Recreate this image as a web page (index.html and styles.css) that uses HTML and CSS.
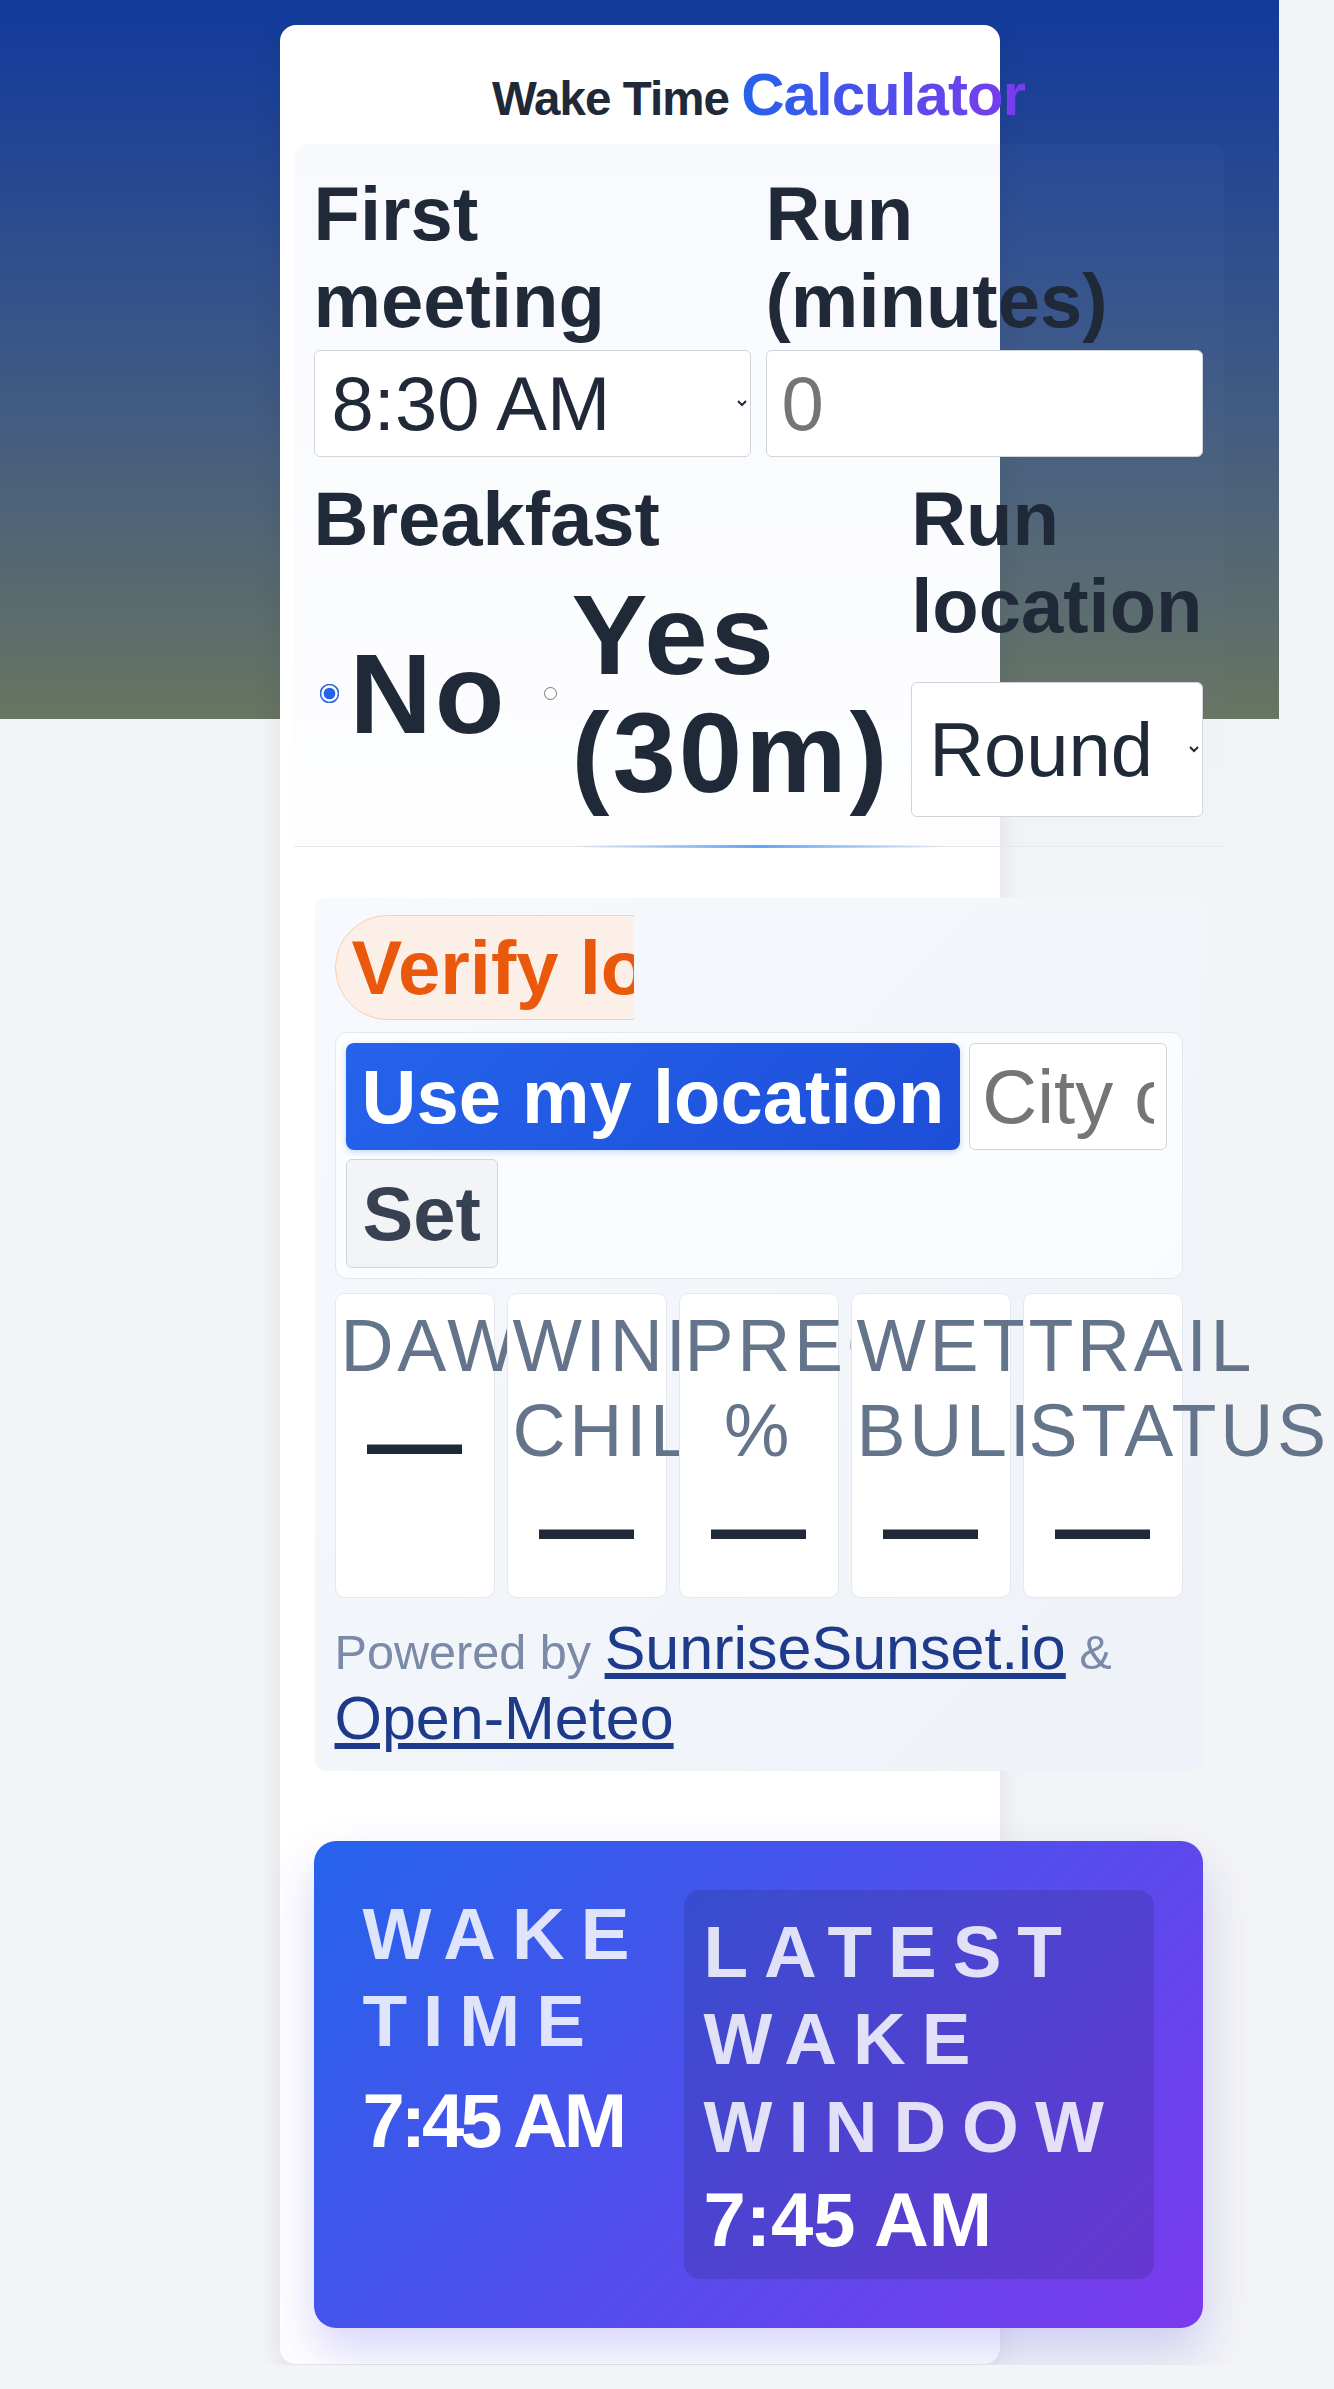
FILE: index.html
```html
<!DOCTYPE html>
<html lang="en">
<head>
<meta charset="utf-8">
<title>Wake Time Calculator</title>
<link rel="stylesheet" href="styles.css">
</head>
<body>
<main class="card">
  <div class="inner">
    <h1 class="title">Wake Time <span class="title-accent">Calculator</span></h1>

    <section class="form">
      <div class="row row-half">
        <div class="field">
          <label class="label" for="meeting">First meeting</label>
          <select id="meeting" class="control">
            <option>8:30 AM</option>
          </select>
        </div>
        <div class="field">
          <label class="label" for="run">Run (minutes)</label>
          <input id="run" class="control control-input" type="text" placeholder="0">
        </div>
      </div>
      <div class="row row-wide">
        <div class="field">
          <span class="label">Breakfast</span>
          <div class="radios">
            <label class="option"><input class="radio" type="radio" name="breakfast" checked><span class="option-text">No</span></label>
            <label class="option"><input class="radio" type="radio" name="breakfast"><span class="option-text">Yes (30m)</span></label>
          </div>
        </div>
        <div class="field">
          <label class="label" for="loc">Run location</label>
          <select id="loc" class="control control-stretch">
            <option>Round</option>
          </select>
        </div>
      </div>
    </section>

    <section class="loc">
      <div class="badge-clip"><span class="badge">Verify location</span></div>
      <div class="loc-box">
        <button class="btn btn-primary" type="button">Use my location</button>
        <input class="city" type="text" placeholder="City or ZIP">
        <button class="btn btn-secondary" type="button">Set</button>
      </div>
      <div class="stats">
        <div class="stat"><div class="stat-label">Dawn</div><div class="stat-value">—</div></div>
        <div class="stat"><div class="stat-label">Wind chill</div><div class="stat-value">—</div></div>
        <div class="stat"><div class="stat-label">Precip %</div><div class="stat-value">—</div></div>
        <div class="stat"><div class="stat-label">Wet bulb</div><div class="stat-value">—</div></div>
        <div class="stat"><div class="stat-label">Trail status</div><div class="stat-value">—</div></div>
      </div>
      <p class="credits">Powered by <a href="#">SunriseSunset.io</a> &amp; <a href="#">Open-Meteo</a></p>
    </section>

    <section class="result">
      <div class="res-col">
        <div class="res-label">Wake time</div>
        <div class="res-value res-value-main">7:45 AM</div>
      </div>
      <div class="res-latest">
        <div class="res-label">Latest wake window</div>
        <div class="res-value res-value-latest">7:45 AM</div>
      </div>
    </section>
  </div>
</main>
</body>
</html>
```

FILE: styles.css
```css
html {
  background: #f3f4f6;
}

body {
  margin: 0;
  padding: 0 55px 1px 0;
  font-family: "Liberation Sans", Arial, sans-serif;
  color: #1f2937;
  background: linear-gradient(180deg, #113a9c 0%, #3c5786 50%, #687562 100%) 0 0 / 1279px 719px no-repeat;
}

.card {
  width: 720px;
  box-sizing: border-box;
  margin: 25px auto 0;
  padding: 14px;
  background: #fff;
  border-radius: 16px;
  box-shadow: 0 10px 30px rgba(15, 23, 42, 0.08);
}

.inner {
  width: 930px;
}

.title {
  margin: 21px 0 14.5px;
  text-align: center;
  font-size: 47.5px;
  font-weight: 700;
  letter-spacing: -0.02em;
  line-height: normal;
  color: #1f2937;
}

.title-accent {
  font-size: 60px;
  background: linear-gradient(90deg, #2563eb, #7c3aed);
  -webkit-background-clip: text;
  background-clip: text;
  color: transparent;
}

/* ---------- form ---------- */
.form {
  position: relative;
  display: flex;
  flex-direction: column;
  gap: 18px;
  padding: 26px 21px 29px 20px;
  border-bottom: 1px solid #e5e7eb;
  border-radius: 14px 14px 0 0;
  background: linear-gradient(180deg, rgba(120, 150, 220, 0.055), rgba(120, 150, 220, 0.01));
}

.form::after {
  content: "";
  position: absolute;
  left: 30%;
  width: 40%;
  bottom: -2px;
  height: 3px;
  background: linear-gradient(90deg, rgba(96, 165, 250, 0), #60a5fa, rgba(96, 165, 250, 0));
}

.row {
  display: grid;
  gap: 15px;
}

.row-half {
  grid-template-columns: 1fr 1fr;
}

.row-wide {
  grid-template-columns: 2fr 1fr;
}

.field {
  display: grid;
  gap: 6px;
  min-width: 0;
}

.label {
  font-size: 76px;
  font-weight: 700;
  line-height: normal;
  color: #1f2937;
}

.control {
  width: 100%;
  box-sizing: border-box;
  margin: 0;
  font-family: inherit;
  font-size: 76px;
  line-height: normal;
  color: #1f2937;
  padding: 9px 13px;
  border: 1px solid #d1d5db;
  border-radius: 6px;
  background: #fff;
}

.control-input {
  padding: 9px 15px;
}

.control-stretch {
  align-self: stretch;
  height: auto;
}

.control::placeholder,
.city::placeholder {
  color: #757575;
}

.radios {
  display: flex;
  align-items: center;
  gap: 37px;
  padding: 8px 0 5px 9px;
}

.option {
  display: flex;
  align-items: center;
  gap: 14px;
}

.radio {
  flex: none;
  width: 13px;
  height: 13px;
  margin: 0;
  accent-color: #2563eb;
}

.radio:checked {
  transform: scale(1.5);
}

.option-text {
  font-size: 114px;
  font-weight: 700;
  letter-spacing: 3px;
  line-height: 118px;
  color: #1f2937;
}

/* ---------- location panel ---------- */
.loc {
  margin: 51.3px 21px 0 21px;
  padding: 17px 20px 18px;
  border-radius: 12px;
  background: linear-gradient(135deg, #f6f9fd, #eef2f8);
}

.badge-clip {
  display: flex;
  width: 299px;
  overflow: hidden;
}

.badge {
  flex: none;
  white-space: nowrap;
  padding: 8px 16px;
  border: 1px solid #fbcfab;
  border-radius: 999px;
  background: #fbefe7;
  color: #ea580c;
  font-size: 76px;
  font-weight: 700;
  line-height: normal;
}

.loc-box {
  margin-top: 12px;
  display: flex;
  flex-wrap: wrap;
  gap: 9px;
  padding: 10px;
  border: 1px solid #e2e8f0;
  border-radius: 12px;
  background: rgba(255, 255, 255, 0.65);
}

.btn {
  margin: 0;
  font-family: inherit;
  font-size: 76px;
  font-weight: 700;
  line-height: normal;
  padding: 10px 16px;
  border-radius: 8px;
  cursor: pointer;
}

.btn-primary {
  border: 0;
  color: #fff;
  background: linear-gradient(135deg, #2563eb, #1d4ed8);
  box-shadow: 0 2px 6px rgba(37, 99, 235, 0.25);
}

.btn-secondary {
  border: 1px solid #d1d5db;
  background: #f3f4f6;
  color: #374151;
  border-radius: 6px;
}

.city {
  width: 198px;
  box-sizing: border-box;
  margin: 0;
  font-family: inherit;
  font-size: 76px;
  line-height: normal;
  padding: 9px 12px;
  border: 1px solid #d1d5db;
  border-radius: 6px;
  background: #fff;
  color: #1f2937;
}

.stats {
  margin-top: 14px;
  display: grid;
  grid-template-columns: repeat(5, 1fr);
  gap: 12px;
}

.stat {
  min-width: 0;
  background: #fff;
  border: 1px solid #e4e9f1;
  border-radius: 10px;
  padding: 9px 5px 15px;
  text-align: center;
}

.stat-label {
  font-size: 73.5px;
  letter-spacing: 0.05em;
  text-transform: uppercase;
  line-height: normal;
  color: #64748b;
}

.stat-value {
  font-size: 95px;
  font-weight: 700;
  line-height: normal;
  color: #1f2937;
}

.credits {
  margin: 15.5px 0 0;
  font-size: 48.6px;
  line-height: normal;
  color: #7b8aa6;
}

.credits a {
  font-size: 61px;
  color: #1e3a8a;
}

/* ---------- result ---------- */
.result {
  margin: 69.5px 21px 21.5px 20px;
  padding: 49px;
  border-radius: 22px;
  background: linear-gradient(135deg, #2563eb, #7c3aed);
  box-shadow: 0 24px 48px rgba(79, 70, 229, 0.22);
  display: grid;
  grid-template-columns: 297px 1fr;
  gap: 24px;
  align-items: start;
  color: #fff;
}

.res-label {
  font-size: 73px;
  font-weight: 700;
  letter-spacing: 16px;
  text-transform: uppercase;
  line-height: 1.2;
  color: rgba(255, 255, 255, 0.84);
}

.res-value {
  font-size: 76px;
  font-weight: 700;
  line-height: normal;
  color: #fff;
}

.res-value-main {
  margin-top: 12px;
  letter-spacing: -4px;
}

.res-latest {
  padding: 18px 20px 16.5px;
  border-radius: 16px;
  background: rgba(15, 23, 42, 0.14);
}

.res-value-latest {
  margin-top: 5px;
}
```
